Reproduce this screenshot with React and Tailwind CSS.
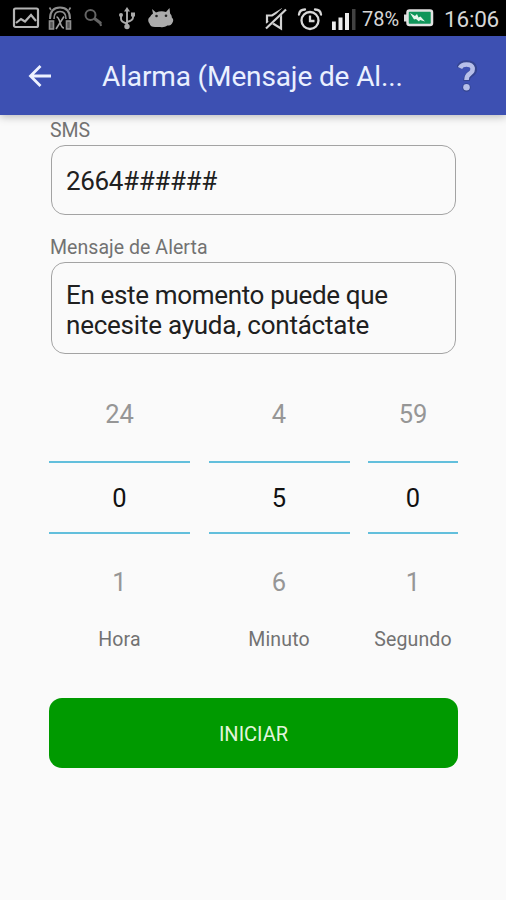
import React from "react";

function ImageIcon() {
  return (
    <svg className="ml-3 h-[22px] w-7 shrink-0" viewBox="0 0 28 22" fill="none" stroke="#b4b4b4" strokeWidth="2.2">
      <rect x="2" y="1.5" width="24" height="18.5" rx="1.5" />
      <path d="M4 16l5-4 4 2.500 6-6.500 5 6" />
    </svg>
  );
}

function HeadsetIcon() {
  return (
    <svg className="ml-[7px] h-7 w-[26px] shrink-0" viewBox="0 0 26 28" fill="none" stroke="#8e8e8e" strokeWidth="1.6">
      <path d="M3 15C3 7 7 3.500 13 3.500s10 3.500 10 11.500" strokeWidth="2" />
      <path d="M7 15c0-5 2-7.500 6-7.500s6 2.500 6 7.500" />
      <path d="M4 6L2.500 3.500M22 6l1.500-2.500" />
      <rect x="2.500" y="17" width="4" height="8" fill="#555" />
      <rect x="19.500" y="17" width="4" height="8" fill="#555" />
      <path d="M9.500 13c4 0 3 11 7.500 11M17 12.500L9 25" stroke="#a0a0a0" />
    </svg>
  );
}

function KeyIcon() {
  return (
    <svg className="ml-[11px] h-5 w-5 shrink-0" viewBox="0 0 20 20" fill="none" stroke="#646464" strokeWidth="2">
      <circle cx="6.500" cy="7" r="5" />
      <path d="M10.500 10.500l6.500 5" strokeWidth="3" />
      <path d="M16 14l1 4" />
    </svg>
  );
}

function UsbIcon() {
  return (
    <svg className="ml-3.5 h-6 w-[18px] shrink-0" viewBox="0 0 18 24" fill="none" stroke="#aaa" strokeWidth="1.9">
      <path d="M9 3v18M9 17.500Q3 16 3 13V9M9 16q6-1.500 6-4.500V8" />
      <path d="M6 5.500l3-4.500 3 4.500z" fill="#aaa" stroke="none" />
      <circle cx="9" cy="20.500" r="2.700" fill="#aaa" stroke="none" />
      <circle cx="3" cy="9" r="2" fill="#aaa" stroke="none" />
      <path d="M13 6.500h4v4h-4z" fill="#aaa" stroke="none" />
    </svg>
  );
}

function CatIcon() {
  return (
    <svg className="ml-3 h-[22px] w-[26px] shrink-0" viewBox="0 0 26 22">
      <path
        d="M4 2l4 3.500Q13 3.500 18 5L21.500 1l.6 5.500Q24 8.500 23.800 10.500q2.200 1.500 1 4.500c-1 3-3 3.500-5.500 3.500-2 1.500-4.500 2-7 1.500H7c-3 0-5-1-5.500-3.500-2-2.500-1.500-5.500.5-6.500Q3 7.500 5 6.500z"
        fill="#ababab"
      />
      <circle cx="8.500" cy="9" r="1.300" fill="#222" />
      <circle cx="18" cy="8.800" r="1.300" fill="#222" />
    </svg>
  );
}

function MutedIcon() {
  return (
    <svg className="mt-0.5 mr-px h-6 w-[22px] shrink-0" viewBox="0 0 22 24" fill="none" stroke="#d2d2d2" strokeWidth="2.2">
      <path d="M2 8.500v7h4.500l9.500 6V3L7 8.500z" />
      <path d="M0 21.500L20 1.500" stroke="#000" strokeWidth="4.5" />
      <path d="M1 21.500L21 2.500" />
    </svg>
  );
}

function AlarmIcon() {
  return (
    <svg className="mt-0.5 ml-[9px] h-6 w-[26px] shrink-0" viewBox="0 0 26 24" fill="none" stroke="#d8d8d8" strokeWidth="2.3">
      <circle cx="13" cy="13.500" r="8.500" />
      <path d="M13 8.500v5.500h4.500" />
      <path d="M2 7.500q.5-5 6-5M24 7.500q-.5-5-6-5" strokeLinecap="round" />
    </svg>
  );
}

function SignalIcon() {
  return (
    <svg className="mt-0.5 ml-2 h-6 w-[26px] shrink-0" viewBox="0 0 26 24">
      <path d="M1 14.500h3.800v8.500H1zM7.500 10.500h4v12.500h-4zM14 6h4v17h-4z" fill="#ececec" />
      <path d="M21 2h3.500v21H21z" fill="#414141" />
    </svg>
  );
}

function BatteryIcon() {
  return (
    <svg className="h-[18px] w-[30px] shrink-0" viewBox="0 0 30 18">
      <path d="M0 5.500h4v7H0z" fill="#ddd" />
      <rect x="3.500" y="1.500" width="24.500" height="14.500" rx="2" fill="#10955a" stroke="#e2e2e2" strokeWidth="2.500" />
      <path d="M6 4l5 3 2-2 1.500 3.500 2-1 4.500 5-5-1.500-1 1.500-3-2.500-2 .5z" fill="#e8f6ed" />
    </svg>
  );
}

function StatusBar() {
  return (
    <div className="flex h-9 items-center bg-black text-[#d6d6d6]">
      <ImageIcon />
      <HeadsetIcon />
      <KeyIcon />
      <UsbIcon />
      <CatIcon />
      <div className="ml-auto flex items-center pr-[7px]">
        <MutedIcon />
        <AlarmIcon />
        <SignalIcon />
        <span className="mt-0.5 ml-[5px] w-[42px] text-[20px] leading-9 whitespace-nowrap">78%</span>
        <BatteryIcon />
        <span className="mt-0.5 ml-2.5 w-[55px] text-right text-[22.5px] leading-9 tracking-[-0.2px] whitespace-nowrap">
          16:06
        </span>
      </div>
    </div>
  );
}

function Header() {
  return (
    <header className="flex h-[79px] items-center bg-[#3d50b2] shadow-[0_2px_8px_rgba(0,0,0,0.25)]">
      <svg className="ml-7 h-6 w-6 shrink-0" viewBox="0 0 24 24" fill="none" stroke="#edf1ff" strokeWidth="2.8">
        <path d="M12.500 2L2.500 12l10 10M2.500 12H23" />
      </svg>
      <h1 className="mt-0.5 ml-[50px] w-[310px] text-[28px] leading-10 tracking-[-0.13px] whitespace-nowrap text-[#eaf0ff]">
        Alarma (Mensaje de Al...
      </h1>
      <svg className="ml-[45px] h-8 w-5 shrink-0" viewBox="0 0 20 32" fill="none">
        <path d="M2.500 8Q4 3.500 9.500 3.500c9 0 9 7.500 4 10.500-2.500 1.500-4 3-4 7" stroke="#34448f" strokeWidth="6.500" />
        <circle cx="9.500" cy="27.500" r="4.200" fill="#34448f" />
        <path d="M3 8Q4.500 4.500 9.500 4.500c7.500 0 7.500 6 3.500 9-2.500 1.500-3.500 3-3.500 6.500" stroke="#b6bfe9" strokeWidth="4.600" />
        <circle cx="9.500" cy="27.300" r="3.300" fill="#b6bfe9" />
      </svg>
    </header>
  );
}

function Picker({ values, label, width }) {
  return (
    <div className={`flex flex-col items-center text-[25.5px] ${width}`}>
      <span className="h-12 leading-[48px] text-[#969696]">{values[0]}</span>
      <div className="mt-[23px] flex h-[73px] w-full items-center justify-center border-y-2 border-[#62bfdc] pt-0.5 text-[#111]">
        {values[1]}
      </div>
      <span className="mt-6 h-12 leading-[48px] text-[#969696]">{values[2]}</span>
      <span className="mt-[22px] text-[19.5px] leading-6 tracking-[0.15px] text-[#727272]">{label}</span>
    </div>
  );
}

export default function App() {
  return (
    <div className="h-[900px] w-[506px] overflow-hidden bg-[#fafafa] font-[Roboto,sans-serif]">
      <StatusBar />
      <Header />
      <main className="pr-12 pl-[49px]">
        <label className="mt-1 block pl-px text-[19.5px] leading-6 text-[#727272]">SMS</label>
        <div className="mt-0.5 mr-[2px] ml-[2px] flex h-[70px] items-center rounded-[14px] border-[1.5px] border-[#a3a3a3] pt-0.5 pl-3.5 text-[26px] tracking-[-0.36px] text-[#202020]">
          2664######
        </div>
        <label className="mt-[21px] block pl-px text-[19.5px] leading-6 tracking-[0.05px] text-[#727272]">
          Mensaje de Alerta
        </label>
        <div className="mt-0.5 mr-[2px] ml-[2px] flex h-[92px] items-center rounded-[14px] border-[1.5px] border-[#a3a3a3] pt-[3px] pl-3.5 text-[26px] leading-[30px] tracking-[-0.34px] text-[#202020]">
          <p>
            En este momento puede que
            <br />
            <span className="tracking-[-0.23px]">necesite ayuda, contáctate</span>
          </p>
        </div>
        <div className="mt-9 flex justify-between">
          <Picker values={[24, 0, 1]} label="Hora" width="w-[141px]" />
          <Picker values={[4, 5, 6]} label="Minuto" width="w-[141px]" />
          <Picker values={[59, 0, 1]} label="Segundo" width="w-[90px]" />
        </div>
        <button className="mt-[46px] flex h-[70px] w-full items-center justify-center rounded-[13px] bg-[#009a00] pt-0.5 text-[20px] text-[#e2f5dc]">
          INICIAR
        </button>
      </main>
    </div>
  );
}
